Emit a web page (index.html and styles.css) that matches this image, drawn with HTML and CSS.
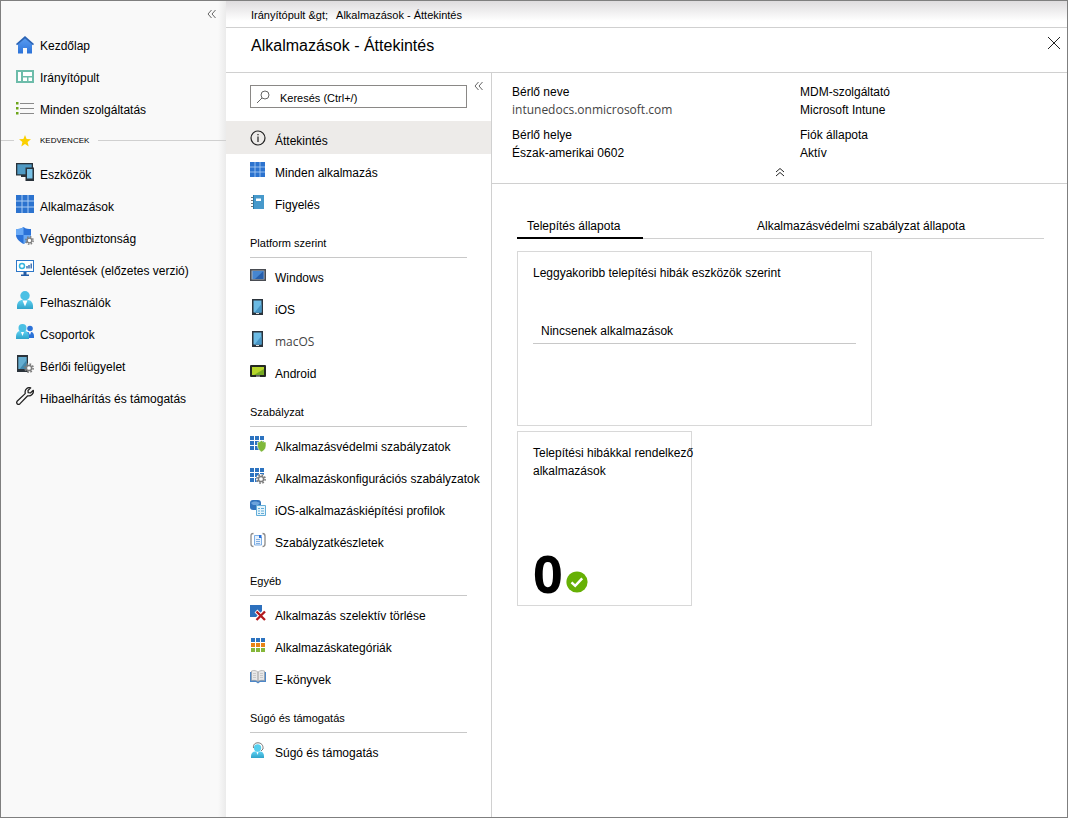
FILE: index.html
```html
<!DOCTYPE html>
<html lang="hu">
<head>
<meta charset="utf-8">
<title>Alkalmazások - Áttekintés</title>
<link rel="stylesheet" href="styles.css">
</head>
<body>
<svg class="defs" aria-hidden="true">
  <defs>
    <linearGradient id="sky" x1="0" y1="0" x2="0" y2="1"><stop offset="0" stop-color="#5fd0f2"/><stop offset="1" stop-color="#2fa3c9"/></linearGradient>
    <linearGradient id="blue" x1="0" y1="0" x2="0" y2="1"><stop offset="0" stop-color="#5a9df2"/><stop offset="1" stop-color="#2b72d8"/></linearGradient>
    <symbol id="gear" viewBox="0 0 10 10"><circle cx="5" cy="5" r="4.1" fill="none" stroke="#7d7d7d" stroke-width="1.6" stroke-dasharray="1.7 1.52"/><circle cx="5" cy="5" r="2.6" fill="#fff" stroke="#7d7d7d" stroke-width="1.5"/></symbol>
    <symbol id="grid" viewBox="0 0 18 18"><path fill="#2c73cf" d="M0 0h18v18H0z"/><path stroke="#a9cdf5" d="M6 0v18M12 0v18M0 6h18M0 12h18"/></symbol>
    <symbol id="tiles" viewBox="0 0 14 14"><path fill="#2c73c0" d="M0 0h4v4H0zM5 0h4v4H5zM10 0h4v4h-4zM0 5h4v4H0zM5 5h4v4H5zM10 5h4v4h-4zM0 10h4v4H0zM5 10h4v4H5z"/></symbol>
    <symbol id="phone" viewBox="0 0 16 16"><path fill="#2b333b" d="M2 0h11v16H2z"/><path fill="#6cbbe4" d="M3.500 1.500h8v12h-8z"/><path fill="#4796c6" d="M11.500 5v8.500h-7z"/><path fill="#ddd" d="M6 14h3v1H6z"/></symbol>
  </defs>
</svg>
<div class="portal">
  <nav class="sidebar" aria-label="Portál">
    <button class="collapse" aria-label="Oldalsáv összecsukása"><svg viewBox="0 0 10 10"><path d="M4.500 1 1 5l3.500 4M8.500 1 5 5l3.500 4"/></svg></button>
    <ul class="nav nav-top">
      <li><a href="#"><svg viewBox="0 0 18 18"><path fill="url(#blue)" d="M2 8 9 2l7 6v9.500h-5V12H7v5.500H2z"/><path fill="#2862b5" d="M9 0 0 8l1 1.300L9 2.500l8 6.800L18 8z"/></svg><span>Kezdőlap</span></a></li>
      <li><a href="#"><svg viewBox="0 0 18 18"><path fill="#6dbcaa" d="M0 2h18v13H0z"/><path fill="#fff" d="M2 4h3v9H2zM7 4h9v4H7zM7 9.500h4V13H7zM12.500 9.500H16V13h-3.500z"/></svg><span>Irányítópult</span></a></li>
      <li><a href="#"><svg viewBox="0 0 18 18"><path stroke="#8a8a8a" stroke-width="1.200" d="M4 3.500h14M4 8.500h14M4 13.500h14"/><path fill="#6da51a" d="M0 2h2.500v2.500H0zM0 7h2.500v2.500H0zM0 12h2.500v2.500H0z"/></svg><span>Minden szolgáltatás</span></a></li>
    </ul>
    <div class="favorites"><svg viewBox="0 0 12 12"><path fill="#fbd000" d="m6 0 1.600 4.100 4.400.2-3.400 2.800L9.700 11.500 6 9 2.300 11.500l1.100-4.400L0 4.300l4.400-.2z"/></svg><span>KEDVENCEK</span></div>
    <ul class="nav">
      <li><a href="#"><svg viewBox="0 0 18 18"><path fill="#29323a" d="M0 0h17v12.500H0z"/><path fill="#4f9ac4" d="M1.300 1.300h14.400v10H1.300z"/><path fill="#29323a" d="M5 12h5v2H5zM9.500 4.500H18V18H9.500z"/><path fill="#78c1e6" d="M11 6h5.500v9.500H11z"/></svg><span>Eszközök</span></a></li>
      <li><a href="#"><svg viewBox="0 0 18 18"><use href="#grid"/></svg><span>Alkalmazások</span></a></li>
      <li><a href="#"><svg viewBox="0 0 18 18"><path fill="#2b72d8" d="M7.500 0C5 2 2.500 2 0 2v6c0 4 4 7 7.500 9 3.500-2 7.500-5 7.500-9V2c-2.500 0-5 0-7.500-2z"/><path fill="#69a9f5" d="M7.500 0C5 2 2.500 2 0 2v6h7.500zM7.500 8H15c0 4-4 7-7.500 9z"/><use href="#gear" x="9" y="9" width="9" height="9"/></svg><span>Végpontbiztonság</span></a></li>
      <li><a href="#"><svg viewBox="0 0 18 18"><path fill="#2d77c8" d="M0 1h18v12H0z"/><path fill="#fff" d="M1 2h16v10H1z"/><circle cx="6" cy="7" r="2.500" fill="none" stroke="#35b5df" stroke-width="1.500"/><path stroke="#245ca5" stroke-width="1.300" d="M11 9.500V7M13 9.500V6M15.200 9.500v-5"/><path fill="#245ca5" d="M7.500 13h3v2.500H13V17H5v-1.500h2.500z"/></svg><span>Jelentések (előzetes verzió)</span></a></li>
      <li><a href="#"><svg viewBox="0 0 18 18"><path fill="url(#sky)" d="M1 18v-3c0-4 3-6 5-6h6c3 0 5 3 5 6v3z"/><circle cx="9" cy="4.700" r="4.700" fill="#4bc0e4"/><path fill="#fff" d="m6.500 9.500 2.500 6 2.500-6z"/></svg><span>Felhasználók</span></a></li>
      <li><a href="#"><svg viewBox="0 0 18 18"><circle cx="14" cy="5.500" r="2.800" fill="#2b72d8"/><path fill="#2b72d8" d="M10 15V9h5c2 0 3 2 3 4v2z"/><path fill="#fff" d="m12.500 9 1.500 3 1-3z"/><path fill="url(#sky)" d="M0 16v-3c0-3 2-5 4-5h5c2 0 4 2 4 5v3z"/><circle cx="6.500" cy="5" r="4" fill="#4bc0e4"/><path fill="#fff" d="m5 9 1.500 4L8 9z"/></svg><span>Csoportok</span></a></li>
      <li><a href="#"><svg viewBox="0 0 18 18"><path fill="#2b333b" d="M1 0h11v17H1z"/><path fill="#65add0" d="M2.300 2h8.400v12H2.300z"/><path fill="#4388ac" d="M10.700 5v9h-7z"/><use href="#gear" x="8" y="8" width="10" height="10"/></svg><span>Bérlői felügyelet</span></a></li>
      <li><a href="#"><svg viewBox="0 0 18 18"><path fill="none" stroke="#222" stroke-width="1.300" stroke-linejoin="round" d="M14.700.9C11.800-.1 9 2 9.100 5l.1 1.600L1.100 14.300c-1.300 2 1 4.100 2.700 2.600l7.900-8.100c3.300.7 6.300-2.200 5.600-5.500l-2.900 2.600-2.200-.2-.2-2.200z"/></svg><span>Hibaelhárítás és támogatás</span></a></li>
    </ul>
  </nav>
  <div class="workspace">
    <nav class="breadcrumb" aria-label="Útvonal"><a href="#">Irányítópult &amp;gt;</a><a href="#">Alkalmazások - Áttekintés</a></nav>
    <header class="blade-head">
      <h1>Alkalmazások - Áttekintés</h1>
      <button class="close" aria-label="Bezárás"><svg viewBox="0 0 12 12"><path d="m0 0 12 12M12 0 0 12"/></svg></button>
    </header>
    <div class="blade">
      <nav class="menu" aria-label="Alkalmazások">
        <div class="search-row">
          <div class="search"><svg viewBox="0 0 14 14"><circle cx="9" cy="5" r="4"/><path d="M6 8 1 13"/></svg><input type="text" aria-label="Keresés" placeholder="Keresés (Ctrl+/)"></div>
          <button class="collapse" aria-label="Menü összecsukása"><svg viewBox="0 0 10 10"><path d="M4.500 1 1 5l3.500 4M8.500 1 5 5l3.500 4"/></svg></button>
        </div>
        <ul>
          <li><a class="current" href="#"><svg viewBox="0 0 16 16"><circle cx="8" cy="8" r="7" fill="none" stroke="#222" stroke-width="1.200"/><path stroke="#222" stroke-width="1.200" d="M8 6.500V12M8 4v1.300"/></svg><span>Áttekintés</span></a></li>
          <li><a href="#"><svg viewBox="0 0 16 16"><use href="#grid" width="15" height="15"/></svg><span>Minden alkalmazás</span></a></li>
          <li><a href="#"><svg viewBox="0 0 16 16"><path fill="#4799cb" d="M3 1h11v14H3z"/><path fill="#2679a8" d="M3 1h1v14H3z"/><path stroke="#777" d="M1 3.500h2M1 6.500h2M1 9.500h2M1 12.500h2"/><path fill="#fff" d="M6 4.500h5V7H6z"/></svg><span>Figyelés</span></a></li>
        </ul>
        <h2>Platform szerint</h2>
        <ul>
          <li><a href="#"><svg viewBox="0 0 16 16"><path fill="#494c52" d="M0 2h16v12H0z"/><path fill="#a9b4c4" d="M1.500 3.500h13v9h-13z"/><path fill="#4686d0" d="M2.500 4h11v8h-11z"/><path fill="#275fab" d="M13.500 4v8H5z"/></svg><span>Windows</span></a></li>
          <li><a href="#"><svg viewBox="0 0 16 16"><use href="#phone"/></svg><span>iOS</span></a></li>
          <li><a class="light" href="#"><svg viewBox="0 0 16 16"><use href="#phone"/></svg><span>macOS</span></a></li>
          <li><a href="#"><svg viewBox="0 0 16 16"><rect y="2" width="16" height="12" rx="1" fill="#242822"/><path fill="#b6d52b" d="M2 4h12v8H2z"/><path fill="#75a923" d="M14 6v6H4z"/><path fill="#ddd" d="M6 12.700h4v.8H6z"/></svg><span>Android</span></a></li>
        </ul>
        <h2>Szabályzat</h2>
        <ul>
          <li><a href="#"><svg viewBox="0 0 16 16"><use href="#tiles" width="14" height="14"/><path fill="#7fb83b" stroke="#fff" stroke-width=".6" d="M11.500 4.500C10 6 9 6 7.500 6v4c0 3 2.500 5 4 6 2-1 4.500-3 4.500-6V6c-2 0-3 0-4.500-1.500z"/></svg><span>Alkalmazásvédelmi szabályzatok</span></a></li>
          <li><a href="#"><svg viewBox="0 0 16 16"><use href="#tiles" width="14" height="14"/><circle cx="11" cy="11" r="5" fill="#fff"/><use href="#gear" x="6" y="6" width="10" height="10"/></svg><span>Alkalmazáskonfigurációs szabályzatok</span></a></li>
          <li><a href="#"><svg viewBox="0 0 16 16"><rect width="11" height="10" rx="3" fill="#3274bd"/><path fill="#6da4dc" d="M1 3c2-2 6-2 9 0L8 5H3z"/><path fill="#e5f4fb" stroke="#63add8" d="M6.500 5.500h9v10h-9z"/><path stroke="#63add8" d="M8 8.500h2M11 8.500h3M8 11h2M11 11h3M8 13.500h2M11 13.500h3"/></svg><span>iOS-alkalmazáskiépítési profilok</span></a></li>
          <li><a href="#"><svg viewBox="0 0 16 16"><path fill="none" stroke="#8b8b8b" stroke-width="1.300" d="M3.500 1.500C1.500 1.500 1 2 1 4v8c0 2 .5 2.500 2.500 2.500M12.500 1.500c2 0 2.500.5 2.500 2.500v8c0 2-.5 2.500-2.500 2.500"/><path fill="#e8f2fd" stroke="#5f9de0" stroke-width=".8" d="M4.500 3.500h5l2 2v7.500h-7z"/><path stroke="#83aedf" d="M6 7.500h4M6 9.500h4M6 11.500h4"/><path fill="#2b72d8" d="M9 3h2.500v3H9z"/></svg><span>Szabályzatkészletek</span></a></li>
        </ul>
        <h2>Egyéb</h2>
        <ul>
          <li><a href="#"><svg viewBox="0 0 16 16"><path fill="#2d70bd" d="M0 0h12v12H0z"/><path stroke="#fff" stroke-width="4" d="m6 6 9 9M15 6l-9 9"/><path stroke="#b2191e" stroke-width="2.300" d="m6.500 6.500 8.500 8.500M15 6.500 6.500 15"/></svg><span>Alkalmazás szelektív törlése</span></a></li>
          <li><a href="#"><svg viewBox="0 0 16 16"><path fill="#2c73c0" d="M1 1h4v4H1zM6 1h4v4H6zM11 1h4v4h-4z"/><path fill="#e78316" d="M1 6h4v4H1zM6 6h4v4H6zM11 6h4v4h-4z"/><path fill="#85b73a" d="M1 11h4v4H1zM6 11h4v4H6zM11 11h4v4h-4z"/></svg><span>Alkalmazáskategóriák</span></a></li>
          <li><a href="#"><svg viewBox="0 0 16 16"><path fill="#4c86c7" d="M0 3h16v10h-6l-2 1.500L6 13H0z"/><path fill="#e8e8e8" stroke="#999" stroke-width=".6" d="M1.500 2C4 1 6 1.500 8 3c2-1.500 4-2 6.500-1v9.500C12 11 10 11 8 12.500 6 11 4 11 1.500 11.500z"/><path stroke="#999" d="M8 3v9.500"/><path stroke="#bbb" stroke-width=".7" d="M3 4.500h3M3 6.500h3M3 8.500h3M10 4.500h3M10 6.500h3M10 8.500h3"/></svg><span>E-könyvek</span></a></li>
        </ul>
        <h2>Súgó és támogatás</h2>
        <ul>
          <li><a href="#"><svg viewBox="0 0 16 16"><path fill="none" stroke="#777" d="M3.500 6C3 2.500 5 .8 8 .8S13.500 3 13 7l-2 2"/><circle cx="7.500" cy="6" r="3.700" fill="#55cfee"/><path fill="url(#sky)" d="M1 16v-2c0-3 2-4.500 4-4.500h5c2.500 0 4 2 4 4.500v2z"/><path fill="#fff" d="m6.500 10 1 3 1-3z"/></svg><span>Súgó és támogatás</span></a></li>
        </ul>
      </nav>
      <main>
        <section class="essentials">
          <dl>
            <div><dt>Bérlő neve</dt><dd class="domain">intunedocs.onmicrosoft.com</dd></div>
            <div><dt>MDM-szolgáltató</dt><dd>Microsoft Intune</dd></div>
            <div><dt>Bérlő helye</dt><dd>Észak-amerikai 0602</dd></div>
            <div><dt>Fiók állapota</dt><dd>Aktív</dd></div>
          </dl>
          <button class="fold" aria-label="Részletek elrejtése"><svg viewBox="0 0 10 10"><path d="m1 5 4-3.500L9 5M1 9l4-3.500L9 9"/></svg></button>
        </section>
        <section class="content">
          <div class="tabs" role="tablist">
            <button role="tab" aria-selected="true">Telepítés állapota</button>
            <button role="tab" aria-selected="false">Alkalmazásvédelmi szabályzat állapota</button>
          </div>
          <article class="card card-wide">
            <h3>Leggyakoribb telepítési hibák eszközök szerint</h3>
            <p class="empty">Nincsenek alkalmazások</p>
          </article>
          <article class="card card-count">
            <h3>Telepítési hibákkal rendelkező<br>alkalmazások</h3>
            <p class="count"><strong>0</strong><svg viewBox="0 0 22 22"><circle cx="11" cy="11" r="10.600" fill="#66b005"/><path fill="none" stroke="#fff" stroke-width="2.500" d="m5.500 11.300 3.700 3.500 7-7.500"/></svg></p>
          </article>
        </section>
      </main>
    </div>
  </div>
</div>
</body>
</html>
```
FILE: styles.css
```css
* { box-sizing: border-box; }
body { margin: 0; font: 12px/18px "Liberation Sans", Arial, sans-serif; color: #000; background: #fff; }
ul, dl, dd, h1, h2, h3, p { margin: 0; padding: 0; font-weight: normal; }
ul { list-style: none; }
a { color: inherit; text-decoration: none; }
button { margin: 0; padding: 0; border: 0; background: none; font: inherit; color: inherit; }
svg { display: block; flex: none; }
.defs { position: absolute; width: 0; height: 0; }

.portal { display: flex; min-height: 100vh; border: 1px solid #7f7f7f; }
.sidebar { flex: none; width: 225px; background: linear-gradient(to right, #f9f9f9 217px, #ebebeb); }
.collapse svg { width: 10px; height: 10px; fill: none; stroke: #666; }
.sidebar .collapse { display: block; margin: 8px 9px 10px auto; }
.nav a { display: flex; align-items: center; height: 32px; padding-left: 15px; white-space: nowrap; }
.nav svg { width: 18px; height: 18px; }
.nav span { padding: 6px 0 0 6px; }
.nav-top span { padding-top: 2px; }
.favorites { display: flex; align-items: center; height: 31px; gap: 9px; font-size: 8px; }
.favorites::before, .favorites::after { content: ""; height: 1px; background: #d0d0d0; }
.favorites::before { width: 13px; margin-right: -4px; }
.favorites::after { flex: 1; }
.favorites svg { width: 12px; height: 12px; }

.workspace { flex: 1; min-width: 0; display: flex; flex-direction: column; }
.breadcrumb { display: flex; gap: 8px; height: 27px; padding: 5px 25px; border-bottom: 1px solid #d0d0d0; font-size: 11px; background: linear-gradient(#dedcde, #fff 20px); }
.blade-head { display: flex; justify-content: space-between; align-items: flex-start; height: 45px; padding: 8px 7px 0 25px; border-bottom: 1px solid #d0d0d0; }
h1 { font-size: 16px; line-height: 20px; }
.close { padding-top: 1px; }
.close svg { width: 12px; height: 12px; stroke: #222; }
.blade { flex: 1; display: flex; }

.menu { flex: none; width: 266px; border-right: 1px solid #d0d0d0; }
.search-row { display: flex; align-items: flex-start; gap: 7px; height: 48px; padding: 12px 0 0 24px; }
.search { display: flex; align-items: center; width: 217px; height: 23px; padding-left: 5px; border: 1px solid #8a8886; }
.search svg { width: 14px; height: 14px; fill: none; stroke: #666; }
.search input { flex: 1; min-width: 0; height: 21px; padding: 2px 0 0 10px; border: 0; outline: 0; background: none; font: inherit; font-size: 11px; }
.search input::placeholder { color: #000; opacity: 1; }
.search-row .collapse { margin-top: -4px; }
.menu a { display: flex; align-items: center; height: 32px; padding-left: 24px; white-space: nowrap; }
.menu a svg { width: 16px; height: 16px; }
.menu a span { padding: 6px 0 0 9px; }
.menu .current { height: 33px; background: #edebe9; }
.menu .light { font-family: "Open Sans", sans-serif; color: #444; }
.menu h2 { height: 40px; margin: 0 24px 1px; padding-top: 16px; border-bottom: 1px solid #c8c8c8; font-size: 11px; }

main { flex: 1; min-width: 0; }
.essentials { height: 111px; padding: 10px 20px 0; border-bottom: 1px solid #d0d0d0; }
.essentials dl { display: grid; grid-template-columns: 288px 1fr; row-gap: 7px; }
.essentials .domain { font-family: "Open Sans", sans-serif; color: #444; }
.fold { display: block; margin: 5px auto 0; }
.fold svg { width: 10px; height: 10px; fill: none; stroke: #222; }
.content { padding: 32px 23px 24px 25px; }
.tabs { display: flex; gap: 104px; margin-bottom: 12px; border-bottom: 1px solid #d0d0d0; }
.tabs button { height: 23px; margin-bottom: -1px; padding: 0 10px 1px; border-bottom: 2px solid transparent; white-space: nowrap; }
.tabs [aria-selected="true"] { min-width: 126px; border-color: #000; text-align: left; }
.card { border: 1px solid #d8d8d8; padding: 12px 15px; margin-bottom: 5px; height: 175px; }
.card h3 { font-size: 12px; white-space: nowrap; }
.card-wide { max-width: 355px; }
.card-count { max-width: 175px; }
.empty { margin-top: 37px; padding: 3px 8px; border-bottom: 1px solid #c8c8c8; }
.count { display: flex; align-items: flex-end; gap: 3px; margin-top: 65px; }
.count strong { font: bold 52px/56px "Open Sans", sans-serif; }
.count svg { width: 22px; height: 22px; margin-bottom: 8px; }
```
